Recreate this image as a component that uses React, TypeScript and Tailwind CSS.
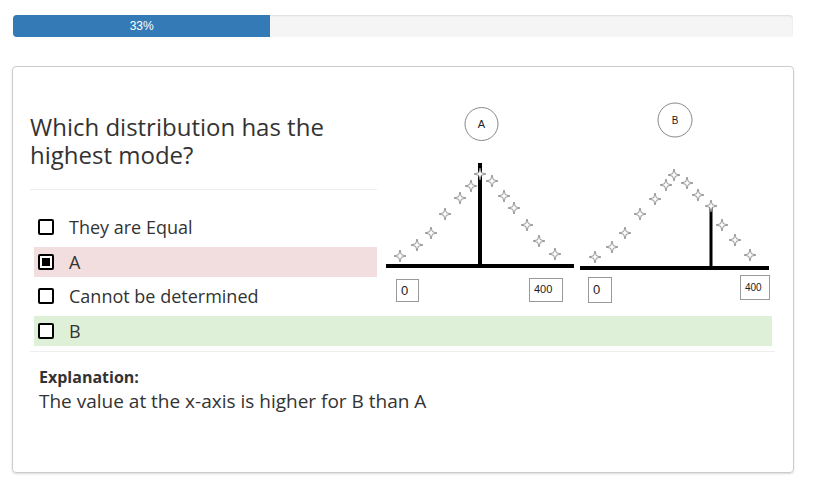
import React from "react";

type Pt = [number, number];

const starsA: Pt[] = [
  [20, 156], [37, 145], [51, 133], [65, 114], [80, 98], [91, 86], [100, 74],
  [112, 81], [124, 96], [134, 108], [147, 125], [159, 141], [175, 154],
];
const starsB: Pt[] = [
  [215, 157], [232, 147], [245, 133], [260, 114], [275, 99], [286, 85], [294, 75],
  [307, 83], [318, 95], [331, 106], [342, 125], [355, 140], [370, 155],
];

function Star({ x, y }: { x: number; y: number }) {
  const d = `M${x} ${y - 6} L${x + 1.3} ${y - 1.3} L${x + 6} ${y} L${x + 1.3} ${y + 1.3} L${x} ${y + 6} L${x - 1.3} ${y + 1.3} L${x - 6} ${y} L${x - 1.3} ${y - 1.3} Z`;
  return <path d={d} fill="#fff" stroke="#8a8a8a" strokeWidth={0.9} />;
}

function Box({ x, y, w, h, label, size }: { x: number; y: number; w: number; h: number; label: string; size: number }) {
  return (
    <g>
      <rect x={x + 0.5} y={y + 0.5} width={w} height={h} fill="#fff" stroke="#999" strokeWidth={1} />
      <text x={x + 5} y={y + h / 2 + size * 0.36} fontSize={size} fontFamily="Liberation Sans, Arial, sans-serif" fill="#222">
        {label}
      </text>
    </g>
  );
}

function Charts() {
  return (
    <svg width={395} height={210} viewBox="0 0 395 210" className="block">
      {/* A */}
      <circle cx={101.5} cy={24} r={16.5} fill="#fff" stroke="#888" strokeWidth={1} />
      <text x={101.5} y={28} textAnchor="middle" fontSize={11} fontFamily="Liberation Sans, Arial, sans-serif" fill="#222">A</text>
      <line x1={6} y1={166} x2={194} y2={166} stroke="#000" strokeWidth={4} />
      <line x1={100} y1={63} x2={100} y2={166} stroke="#000" strokeWidth={4} />
      {starsA.map(([x, y], i) => <Star key={i} x={x} y={y} />)}
      <Box x={16} y={179} w={22} h={22} label="0" size={13} />
      <Box x={149} y={178} w={33} h={23} label="400" size={11} />

      {/* B */}
      <circle cx={295} cy={20} r={17} fill="#fff" stroke="#888" strokeWidth={1} />
      <text x={295} y={24} textAnchor="middle" fontSize={10} fontFamily="Liberation Sans, Arial, sans-serif" fill="#222">B</text>
      <line x1={200} y1={168} x2={389} y2={168} stroke="#000" strokeWidth={4} />
      <line x1={331} y1={106} x2={331} y2={168} stroke="#000" strokeWidth={3} />
      {starsB.map(([x, y], i) => <Star key={i} x={x} y={y} />)}
      <Box x={208} y={177} w={23} h={25} label="0" size={13} />
      <Box x={360} y={175} w={29} h={24} label="400" size={10} />
    </svg>
  );
}

function Check({ checked }: { checked?: boolean }) {
  return (
    <span className="w-[16px] h-[16px] border-2 border-black rounded-[2px] bg-white flex items-center justify-center shrink-0">
      {checked && <span className="w-[8px] h-[8px] bg-black" />}
    </span>
  );
}

function Option({ label, checked, tone }: { label: string; checked?: boolean; tone?: string }) {
  return (
    <div className={`h-[30px] flex items-center gap-[15px] pl-[4px] ${tone ?? ""}`}>
      <Check checked={checked} />
      <span className="text-[18px] leading-none">{label}</span>
    </div>
  );
}

export default function App() {
  return (
    <div className="min-h-screen bg-white text-[#333] font-['Open_Sans',sans-serif]">
      <div className="pt-[15px] pl-[13px]">
        <div className="w-[780px] h-[22px] bg-[#f5f5f5] rounded-[4px] overflow-hidden shadow-[inset_0_1px_2px_rgba(0,0,0,0.1)]">
          <div className="w-[33%] h-full bg-[#337ab7] text-white text-[12px] flex items-center justify-center font-['Liberation_Sans_Narrow','Liberation_Sans',sans-serif]">
            33%
          </div>
        </div>
      </div>

      <div className="mt-[29px] ml-[12px] w-[782px] h-[407px] border border-[#ccc] rounded-[4px] shadow-[0_1px_2px_rgba(0,0,0,0.15)] pl-[17px] pr-[18px]">
        <div className="flex">
          <div className="w-[347px]">
            <h3 className="mt-[46px] text-[24px] leading-[28px] w-[340px]">Which distribution has the highest mode?</h3>
            <div className="mt-[20px] h-px bg-[#eee]" />
            <div className="mt-[22px] ml-[4px] flex flex-col gap-[4.5px]">
              <Option label="They are Equal" />
              <Option label="A" checked tone="bg-[#f2dede]" />
              <Option label="Cannot be determined" />
            </div>
          </div>
          <div className="mt-[33px] ml-[3px]">
            <Charts />
          </div>
        </div>
        <div className="mt-[5px] ml-[4px] mr-[3px]">
          <Option label="B" tone="bg-[#dff0d8]" />
        </div>
        <div className="mt-[5px] h-px bg-[#eee]" />
        <div className="pl-[9px] mt-[14px]">
          <div className="text-[16px] leading-[22px] font-bold">Explanation:</div>
          <div className="text-[19px] leading-[26px]">The value at the x-axis is higher for B than A</div>
        </div>
      </div>
    </div>
  );
}
